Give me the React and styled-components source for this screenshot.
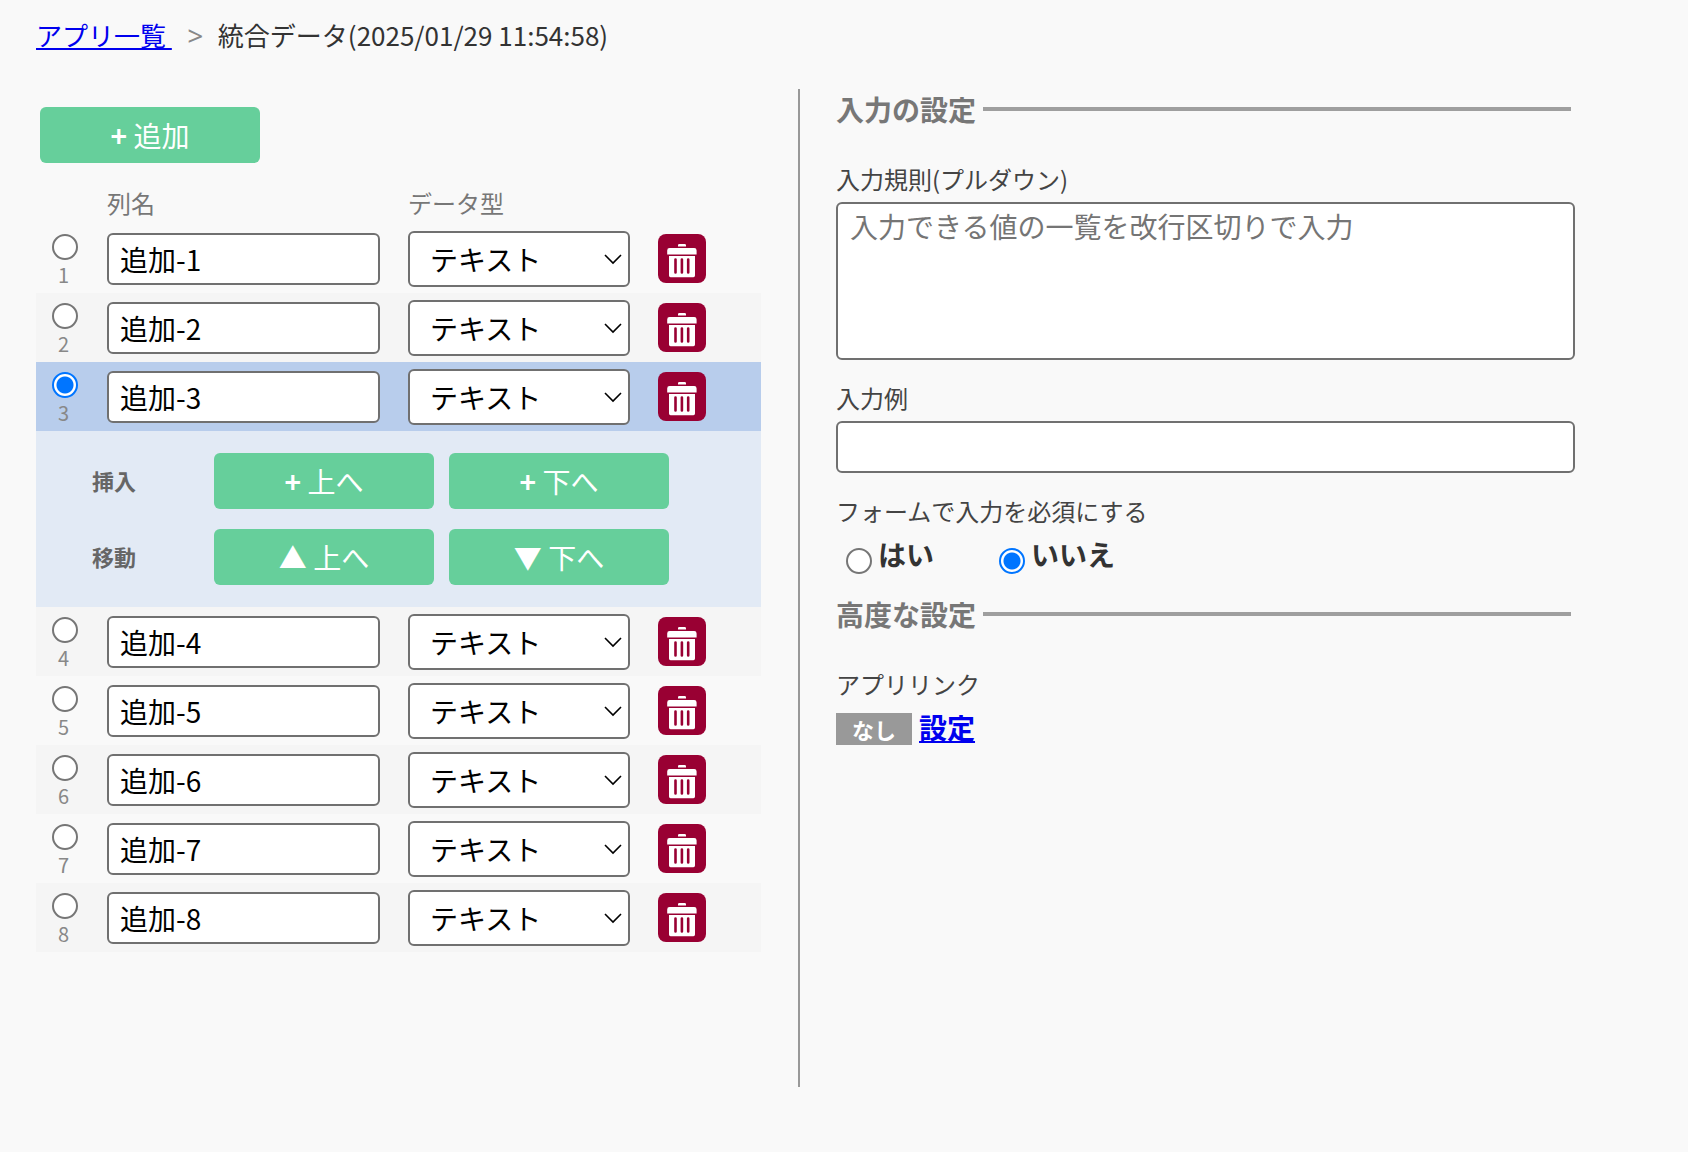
import React, { Fragment, useState } from 'react';
import styled, { createGlobalStyle } from 'styled-components';

const GlobalStyle = createGlobalStyle`
  * {
    box-sizing: border-box;
  }
  body {
    margin: 0;
    background: #f9f9f9;
    color: #333;
    font-family: 'Noto Sans CJK JP', 'Noto Sans', sans-serif;
    font-size: 28px;
  }
  input, select, textarea, button {
    font-family: inherit;
  }
`;

const Page = styled.div`
  display: flex;
  flex-direction: column;
  min-height: 100vh;
  padding: 15px 113px 65px 36px;
`;

const Breadcrumb = styled.nav`
  display: flex;
  align-items: center;
  margin-bottom: 34px;
  font-size: 26px;
  line-height: 40px;
`;

const Link = styled.a`
  color: #0000ee;
  font-weight: ${(props) => (props.$bold ? 'bold' : 'normal')};
  text-decoration: underline;
  white-space: pre;
`;

const Separator = styled.span`
  margin: 0 15px;
  color: #888;
  font-family: 'Noto Sans', sans-serif;
  font-size: 28px;
  font-style: italic;
`;

const Columns = styled.main`
  display: flex;
  flex: 1;
`;

const ListPane = styled.section`
  flex: none;
  width: 762px;
  padding-top: 18px;
`;

const SettingPane = styled.section`
  flex: 1;
  min-width: 0;
  padding-left: 36px;
  border-left: 2px solid #999;
`;

const Button = styled.button`
  width: 220px;
  height: 56px;
  padding: 0;
  border: none;
  border-radius: 6px;
  background: #66cf9b;
  color: white;
  font-size: 28px;
  line-height: 40px;
  cursor: pointer;
`;

const AddArea = styled.div`
  display: flex;
  margin: 0 4px 20px;
`;

const Table = styled.table`
  width: 725px;
  border-collapse: collapse;
  table-layout: fixed;
`;

const HeadCell = styled.th`
  width: ${(props) => props.$width};
  padding: 0 0 1px;
  color: #777;
  font-size: 24px;
  font-weight: normal;
  line-height: 40px;
  text-align: left;
`;

const Row = styled.tr`
  height: 69px;
  background: ${(props) => (props.$selected ? '#b8cdec' : props.$even ? '#f5f5f5' : 'transparent')};
`;

const Cell = styled.td`
  padding: 0;
  vertical-align: middle;
`;

const SelectCell = styled(Cell)`
  padding: 10px 0 0 16px;
  vertical-align: top;
`;

const RowLabel = styled.label`
  display: flex;
  flex-direction: column;
  align-items: flex-start;
  gap: 3px;
`;

const RowNumber = styled.span`
  padding-left: 6px;
  color: #888;
  font-size: 20px;
  line-height: 24px;
`;

const Radio = styled.input.attrs({ type: 'radio' })`
  appearance: none;
  flex: none;
  width: 26px;
  height: 26px;
  margin: 0;
  border: 2px solid #767676;
  border-radius: 50%;
  background: white;

  &:checked {
    border-color: #0075ff;
    background: radial-gradient(circle, #0075ff 8px, white 9px);
  }
`;

const TextInput = styled.input.attrs({ type: 'text' })`
  display: block;
  width: ${(props) => props.$width || '100%'};
  height: 52px;
  padding: 0 11px;
  border: 2px solid #707070;
  border-radius: 6px;
  background: white;
  color: black;
  font-size: 28px;
`;

const TextArea = styled.textarea`
  display: block;
  width: 100%;
  height: 158px;
  padding: 2px 12px;
  border: 2px solid #707070;
  border-radius: 6px;
  background: white;
  font-size: 28px;
  line-height: 40px;
  resize: none;

  &::placeholder {
    color: #757575;
  }
`;

const SelectWrapper = styled.div`
  position: relative;
  width: 222px;

  svg {
    position: absolute;
    top: 23px;
    right: 8px;
    pointer-events: none;
  }
`;

const Select = styled.select`
  appearance: none;
  display: block;
  width: 100%;
  height: 56px;
  padding: 0 20px;
  border: 2px solid #707070;
  border-radius: 6px;
  background: white;
  color: black;
  font-size: 28px;
`;

const DeleteButton = styled.button`
  display: block;
  width: 48px;
  height: 49px;
  padding: 0;
  border: none;
  border-radius: 8px;
  background: #990033;
  cursor: pointer;

  svg {
    display: block;
  }
`;

const ActionCell = styled.td`
  padding: 22px 0 22px 56px;
  background: #e2eaf5;
`;

const ActionRow = styled.div`
  display: flex;
  align-items: center;
  gap: 15px;

  & + & {
    margin-top: 20px;
  }
`;

const ActionLabel = styled.span`
  width: 107px;
  padding-bottom: 2px;
  color: #666;
  font-size: 22px;
  font-weight: bold;
  line-height: 32px;
`;

const Heading = styled.h2`
  display: flex;
  align-items: center;
  gap: 7px;
  margin: 0 4px 32px 0;
  color: #777;
  font-size: 28px;
  font-weight: bold;
  line-height: 40px;

  &::after {
    content: '';
    flex: 1;
    height: 4px;
    background: #9f9f9f;
  }
`;

const Field = styled.div`
  margin-bottom: 20px;
`;

const FieldLabel = styled.label`
  display: block;
  margin-bottom: 5px;
  color: #444;
  font-size: 24px;
  line-height: 36px;
`;

const RadioGroup = styled.div`
  display: flex;
  gap: 65px;
  padding-left: 10px;
`;

const RadioLabel = styled.label`
  display: flex;
  align-items: flex-end;
  gap: 6px;
  font-weight: bold;
  line-height: 40px;
`;

const LinkStatus = styled.div`
  display: flex;
  align-items: baseline;
  gap: 7px;
  line-height: 40px;
`;

const Badge = styled.span`
  padding: 0 16px;
  background: #999;
  color: white;
  font-size: 22px;
  font-weight: bold;
  line-height: 32px;
`;

const Trash = () => (
  <svg width="48" height="49" viewBox="0 0 48 49" fill="#fff" aria-hidden="true">
    <path d="M20 12.5v-1.2a1.3 1.3 0 0 1 1.3-1.3h5.4a1.3 1.3 0 0 1 1.3 1.3v1.2z" />
    <path d="M9.2 20.6v-4.2a2.4 2.4 0 0 1 2.4-2.4h24.6a2.4 2.4 0 0 1 2.4 2.4v4.2z" />
    <path
      fillRule="evenodd"
      d="M11 22h26v19.6a1.6 1.6 0 0 1-1.6 1.6H12.6a1.6 1.6 0 0 1-1.6-1.6zM16.2 25.6v12.8a1.3 1.3 0 0 0 2.6 0V25.6a1.3 1.3 0 0 0-2.6 0zM22.6 25.6v12.8a1.3 1.3 0 0 0 2.6 0V25.6a1.3 1.3 0 0 0-2.6 0zM28.9 25.6v12.8a1.3 1.3 0 0 0 2.6 0V25.6a1.3 1.3 0 0 0-2.6 0z"
    />
  </svg>
);

const Chevron = () => (
  <svg width="18" height="12" viewBox="0 0 18 12" fill="none" stroke="#000" strokeWidth="1.6" aria-hidden="true">
    <path d="M1 1l8 8 8-8" />
  </svg>
);

const App = () => {
  const [columns, setColumns] = useState([1, 2, 3, 4, 5, 6, 7, 8].map((n) => `追加-${n}`));
  const [selected, setSelected] = useState(2);
  const [required, setRequired] = useState('no');

  const rename = (index, name) => {
    setColumns(columns.map((column, i) => (i === index ? name : column)));
  };

  const insert = (index) => {
    setColumns([...columns.slice(0, index), `追加-${columns.length + 1}`, ...columns.slice(index)]);
  };

  const remove = (index) => {
    setColumns(columns.filter((_, i) => i !== index));
  };

  const move = (to) => {
    if (to < 0 || to >= columns.length) return;
    const next = [...columns];
    [next[selected], next[to]] = [next[to], next[selected]];
    setColumns(next);
    setSelected(to);
  };

  return (
    <Page>
      <GlobalStyle />
      <Breadcrumb>
        <Link href="#apps">{'アプリ一覧 '}</Link>
        <Separator>&gt;</Separator>
        <span>統合データ(2025/01/29 11:54:58)</span>
      </Breadcrumb>
      <Columns>
        <ListPane>
          <AddArea>
            <Button type="button" onClick={() => insert(columns.length)}>
              <b>+</b> 追加
            </Button>
          </AddArea>
          <Table>
            <thead>
              <tr>
                <HeadCell $width="71px" />
                <HeadCell $width="301px">列名</HeadCell>
                <HeadCell $width="250px">データ型</HeadCell>
                <HeadCell $width="103px" />
              </tr>
            </thead>
            <tbody>
              {columns.map((name, i) => (
                <Fragment key={i}>
                  <Row $selected={i === selected} $even={i % 2 === 1}>
                    <SelectCell>
                      <RowLabel>
                        <Radio name="column" checked={i === selected} onChange={() => setSelected(i)} />
                        <RowNumber>{i + 1}</RowNumber>
                      </RowLabel>
                    </SelectCell>
                    <Cell>
                      <TextInput
                        $width="273px"
                        aria-label="列名"
                        value={name}
                        onChange={(e) => rename(i, e.target.value)}
                      />
                    </Cell>
                    <Cell>
                      <SelectWrapper>
                        <Select aria-label="データ型">
                          <option>テキスト</option>
                        </Select>
                        <Chevron />
                      </SelectWrapper>
                    </Cell>
                    <Cell>
                      <DeleteButton type="button" aria-label="削除" onClick={() => remove(i)}>
                        <Trash />
                      </DeleteButton>
                    </Cell>
                  </Row>
                  {i === selected && (
                    <tr>
                      <ActionCell colSpan={4}>
                        <ActionRow>
                          <ActionLabel>挿入</ActionLabel>
                          <Button type="button" onClick={() => insert(i)}><b>+</b> 上へ</Button>
                          <Button type="button" onClick={() => insert(i + 1)}><b>+</b> 下へ</Button>
                        </ActionRow>
                        <ActionRow>
                          <ActionLabel>移動</ActionLabel>
                          <Button type="button" onClick={() => move(i - 1)}>▲ 上へ</Button>
                          <Button type="button" onClick={() => move(i + 1)}>▼ 下へ</Button>
                        </ActionRow>
                      </ActionCell>
                    </tr>
                  )}
                </Fragment>
              ))}
            </tbody>
          </Table>
        </ListPane>
        <SettingPane>
          <Heading>入力の設定</Heading>
          <Field>
            <FieldLabel htmlFor="rule">入力規則(プルダウン)</FieldLabel>
            <TextArea id="rule" placeholder="入力できる値の一覧を改行区切りで入力" />
          </Field>
          <Field>
            <FieldLabel htmlFor="example">入力例</FieldLabel>
            <TextInput id="example" />
          </Field>
          <Field>
            <FieldLabel as="div" id="required">フォームで入力を必須にする</FieldLabel>
            <RadioGroup role="radiogroup" aria-labelledby="required">
              <RadioLabel>
                <Radio name="required" checked={required === 'yes'} onChange={() => setRequired('yes')} />
                はい
              </RadioLabel>
              <RadioLabel>
                <Radio name="required" checked={required === 'no'} onChange={() => setRequired('no')} />
                いいえ
              </RadioLabel>
            </RadioGroup>
          </Field>
          <Heading>高度な設定</Heading>
          <Field>
            <FieldLabel as="div">アプリリンク</FieldLabel>
            <LinkStatus>
              <Badge>なし</Badge>
              <Link href="#link" $bold>設定</Link>
            </LinkStatus>
          </Field>
        </SettingPane>
      </Columns>
    </Page>
  );
};

export default App;
